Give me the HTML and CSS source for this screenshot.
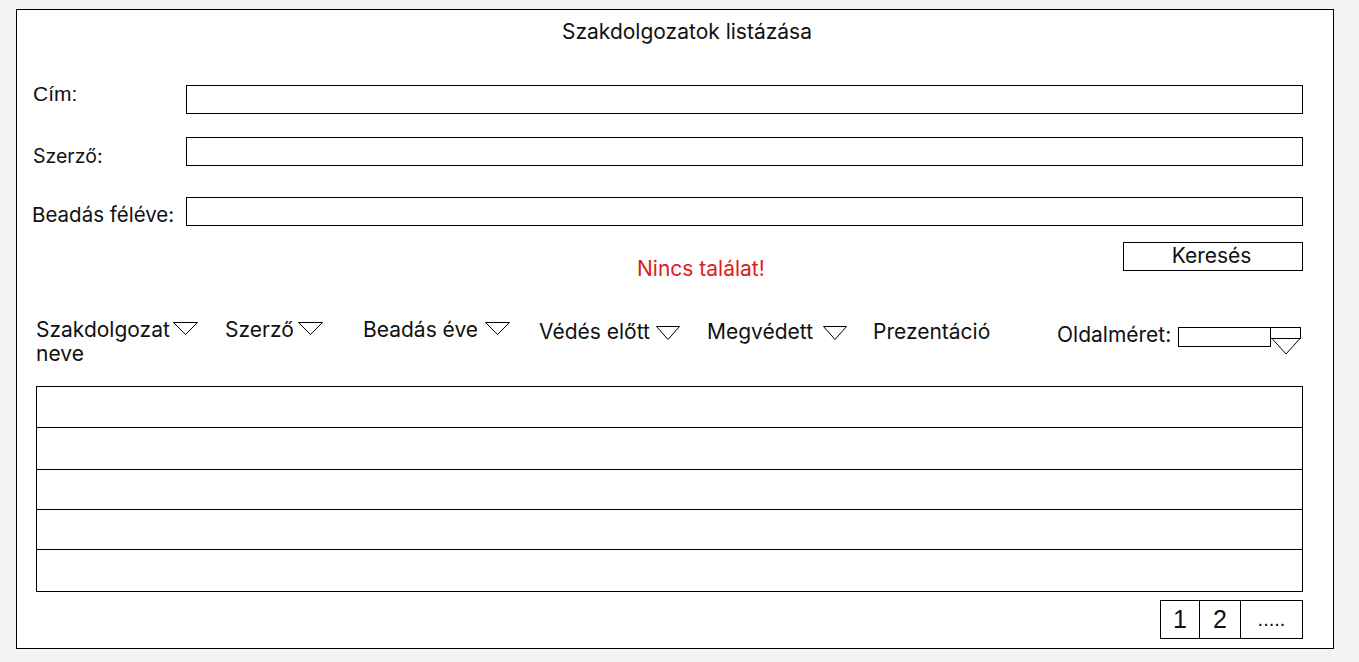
FILE: index.html
```html
<!DOCTYPE html>
<html lang="hu">
<head>
<meta charset="utf-8">
<title>Szakdolgozatok listázása</title>
<link rel="stylesheet" href="styles.css">
</head>
<body>
<div class="frame">
  <h1 class="title">Szakdolgozatok listázása</h1>

  <div class="form">
    <div class="form-row row-cim">
      <label class="label label-cim">Cím:</label>
      <div class="input"></div>
    </div>
    <div class="form-row row-szerzo">
      <label class="label label-szerzo">Szerző:</label>
      <div class="input"></div>
    </div>
    <div class="form-row row-felev">
      <label class="label label-felev">Beadás féléve:</label>
      <div class="input"></div>
    </div>
    <div class="action-row">
      <div class="message">Nincs találat!</div>
      <div class="button">Keresés</div>
    </div>
  </div>

  <div class="list">
    <div class="header">
      <div class="col">Szakdolgozat<svg class="tri t1" width="25" height="13" viewBox="0 0 25 13"><polygon points="0.5,0.5 24.5,0.5 12.5,12.5" /></svg><br>neve</div>
      <div class="col">Szerző<svg class="tri t2" width="25" height="13" viewBox="0 0 25 13"><polygon points="0.5,0.5 24.5,0.5 12.5,12.5" /></svg></div>
      <div class="col">Beadás éve<svg class="tri t3" width="25" height="13" viewBox="0 0 25 13"><polygon points="0.5,0.5 24.5,0.5 12.5,12.5" /></svg></div>
      <div class="col low">Védés előtt<svg class="tri t4" width="24" height="14" viewBox="0 0 24 14"><polygon points="0.5,0.5 23.5,0.5 12,13.5" /></svg></div>
      <div class="col low">Megvédett<svg class="tri t5" width="24" height="14" viewBox="0 0 24 14"><polygon points="0.5,0.5 23.5,0.5 12,13.5" /></svg></div>
      <div class="col low">Prezentáció</div>
      <div class="col pagesize">
        <span>Oldalméret:</span>
        <div class="select-box"></div>
        <svg class="select-arrow" width="32" height="29" viewBox="0 0 32 29"><rect x="0.5" y="0.5" width="30" height="11" /><polygon points="2,11.5 30,11.5 16,27" /></svg>
      </div>
    </div>

    <div class="table">
      <div class="trow"></div>
      <div class="trow tall"></div>
      <div class="trow"></div>
      <div class="trow"></div>
      <div class="trow tall"></div>
    </div>

    <div class="pager">
      <div class="page p1">1</div>
      <div class="page p2">2</div>
      <div class="page more">.....</div>
    </div>
  </div>
</div>
</body>
</html>
```

FILE: styles.css
```css
* { box-sizing: border-box; }

body {
  margin: 0;
  background: #f3f3f3;
  font-family: "Inter", "Liberation Sans", sans-serif;
  color: #111;
}

.frame {
  margin: 9px 0 0 16px;
  width: 1318px;
  height: 640px;
  border: 1px solid #000;
  background: #fff;
}

.title {
  margin: 0;
  padding: 10px 0 0 24px;
  font-size: 21px;
  font-weight: 400;
  line-height: 24px;
  text-align: center;
}

.form {
  padding: 0 30px 0 16px;
}

.form-row {
  display: flex;
  align-items: flex-start;
}

.row-cim { margin-top: 41px; }
.row-szerzo { margin-top: 23px; }
.row-felev { margin-top: 30px; }

.label {
  width: 153px;
  line-height: 22px;
}
.label-cim {
  font-family: "Liberation Sans", sans-serif;
  font-size: 21px;
  margin-top: -2px;
}
.label-szerzo {
  font-size: 19.5px;
  margin-top: 8px;
}
.label-felev {
  font-size: 20.5px;
  margin-top: 7px;
  margin-left: -1px;
  width: 154px;
}

.input {
  flex: 1;
  height: 29px;
  border: 1px solid #000;
}

.action-row {
  display: flex;
  align-items: flex-start;
  margin-top: 16px;
}

.message {
  margin-left: 604px;
  margin-top: 15px;
  color: #e01b1b;
  font-size: 21px;
  line-height: 24px;
}

.button {
  margin-left: auto;
  width: 180px;
  height: 29px;
  padding-right: 3px;
  border: 1px solid #000;
  font-size: 21px;
  line-height: 25px;
  text-align: center;
}

.list {
  padding: 0 30px 0 19px;
}

.header {
  display: grid;
  grid-template-columns: 189px 138px 176px 168px 166px 184px 1fr;
  margin-top: 37px;
  font-size: 21px;
  line-height: 24px;
}

.col { white-space: nowrap; }
.col.low { padding-top: 2px; }

.tri polygon {
  fill: none;
  stroke: #000;
  stroke-width: 1;
}
.t1, .t2, .t3 { vertical-align: 2px; }
.t4, .t5 { vertical-align: -1px; }
.t1 { margin-left: 3px; }
.t2 { margin-left: 4px; }
.t3 { margin-left: 7px; }
.t4 { margin-left: 6px; }
.t5 { margin-left: 10px; }

.pagesize {
  display: flex;
  align-items: flex-start;
  padding-top: 5px;
}
.pagesize span { margin-right: 7px; }
.select-box {
  margin-top: 4px;
  width: 93px;
  height: 20px;
  border: 1px solid #000;
}
.select-arrow {
  margin-top: 4px;
  margin-left: -1px;
}
.select-arrow rect,
.select-arrow polygon {
  fill: #fff;
  stroke: #000;
  stroke-width: 1;
}

.table {
  margin-top: 20px;
  border: 1px solid #000;
}
.trow { height: 40px; }
.trow.tall { height: 42px; }
.trow + .trow { border-top: 1px solid #000; }

.pager {
  display: flex;
  justify-content: flex-end;
  margin-top: 8px;
}
.page {
  height: 39px;
  border: 1px solid #000;
  font-family: "Liberation Sans", sans-serif;
  font-size: 25px;
  line-height: 37px;
  text-align: center;
}
.page + .page { margin-left: -1px; }
.p1 { width: 40px; }
.p2 { width: 42px; }
.more { width: 63px; font-size: 20px; line-height: 37px; }
```
